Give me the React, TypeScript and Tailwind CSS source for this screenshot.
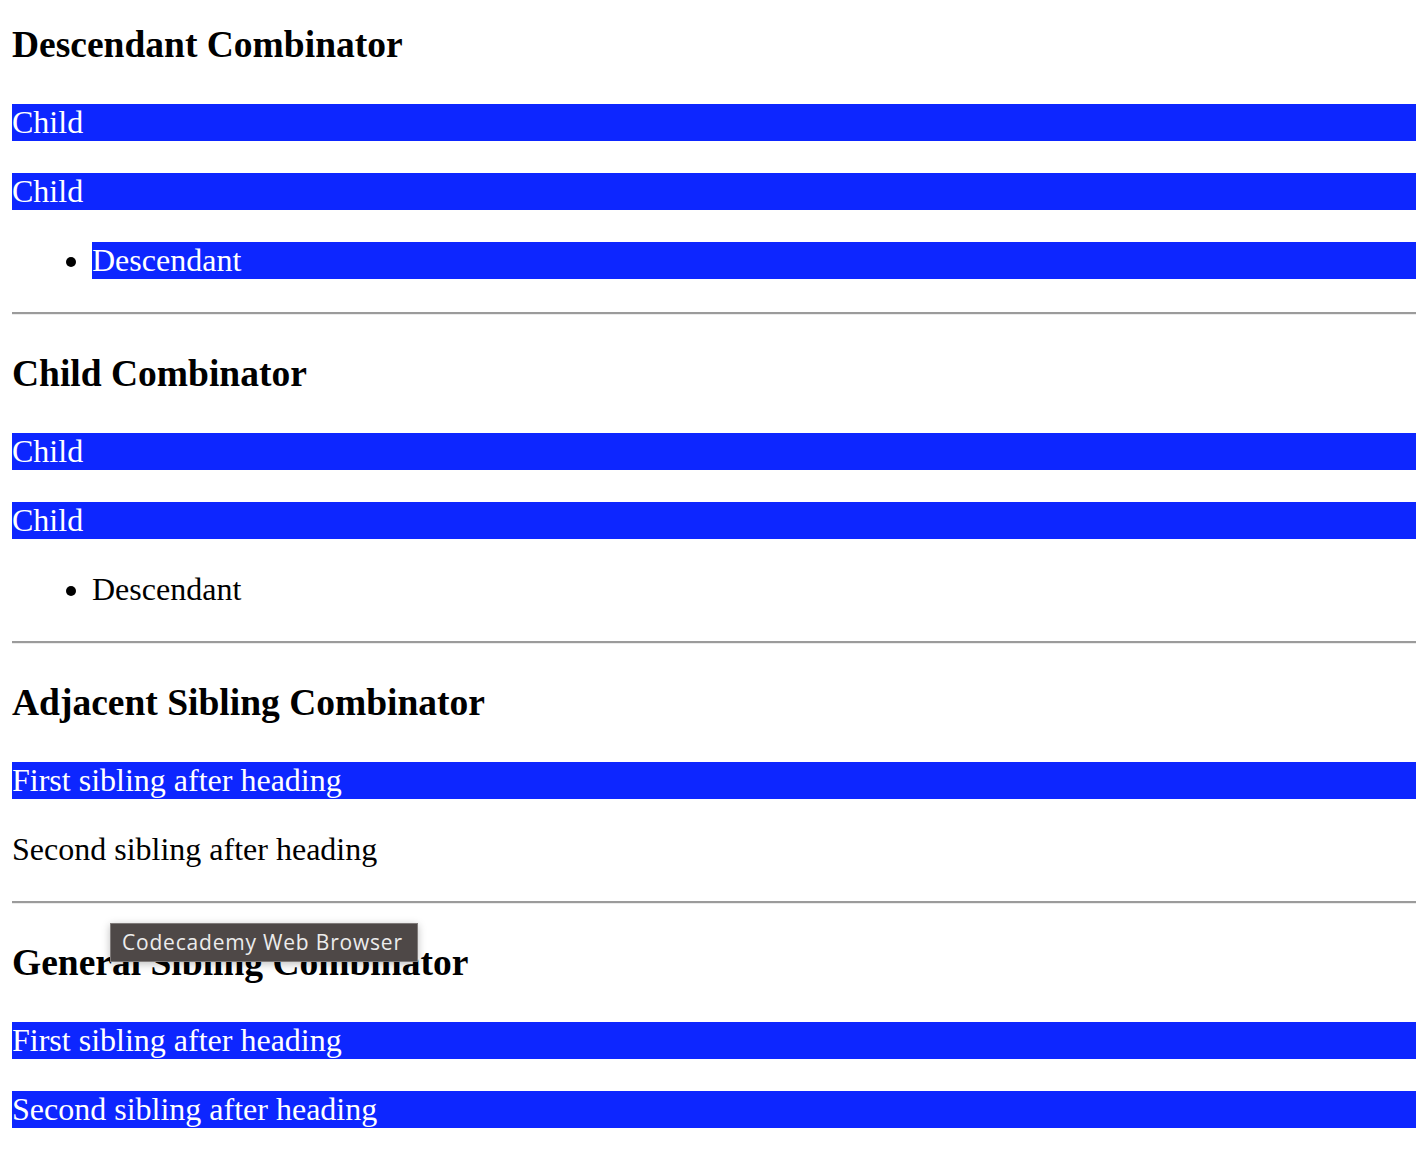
import React from 'react';

const bar = 'bg-[#0d26ff] text-white h-[37px] leading-[37px] text-[32px] whitespace-nowrap';
const plain = 'text-black h-[37px] leading-[37px] text-[32px] whitespace-nowrap';
const heading = 'text-[37.5px] leading-[42px] font-bold text-black';

function Rule() {
  return <div className="mt-[33px] h-[3px] border-t-2 border-b border-t-[#9b9b9b] border-b-[#ececec]" />;
}

export default function App() {
  return (
    <div
      className="relative min-h-[1170px] bg-white px-[12px] flex flex-col"
      style={{ fontFamily: '"Liberation Serif", "Times New Roman", serif' }}
    >
      {/* Descendant */}
      <h2 className={`${heading} mt-[24px]`}>Descendant Combinator</h2>
      <p className={`${bar} mt-[38px]`}>Child</p>
      <p className={`${bar} mt-[32px]`}>Child</p>
      <ul className="mt-[32px] pl-[80px] list-disc marker:text-black">
        <li className={bar}>Descendant</li>
      </ul>
      <Rule />

      {/* Child */}
      <h2 className={`${heading} mt-[38px]`}>Child Combinator</h2>
      <p className={`${bar} mt-[38px]`}>Child</p>
      <p className={`${bar} mt-[32px]`}>Child</p>
      <ul className="mt-[32px] pl-[80px] list-disc">
        <li className={plain}>Descendant</li>
      </ul>
      <Rule />

      {/* Adjacent sibling */}
      <h2 className={`${heading} mt-[38px]`}>Adjacent Sibling Combinator</h2>
      <p className={`${bar} mt-[38px]`}>First sibling after heading</p>
      <p className={`${plain} mt-[32px]`}>Second sibling after heading</p>
      <Rule />

      {/* General sibling */}
      <h2 className={`${heading} mt-[38px]`}>General Sibling Combinator</h2>
      <p className={`${bar} mt-[38px]`}>First sibling after heading</p>
      <p className={`${bar} mt-[32px]`}>Second sibling after heading</p>

      {/* tooltip */}
      <div
        className="absolute left-[110px] top-[923px] w-[308px] h-[39px] bg-[#4e4847] border border-[#7f7a79] text-[#ececec] text-[21px] tracking-[0.8px] leading-[37px] pl-[11px] whitespace-nowrap shadow-[0_2px_8px_rgba(0,0,0,0.25)]"
        style={{ fontFamily: '"Open Sans", "Liberation Sans", Arial, sans-serif' }}
      >
        Codecademy Web Browser
      </div>
    </div>
  );
}
